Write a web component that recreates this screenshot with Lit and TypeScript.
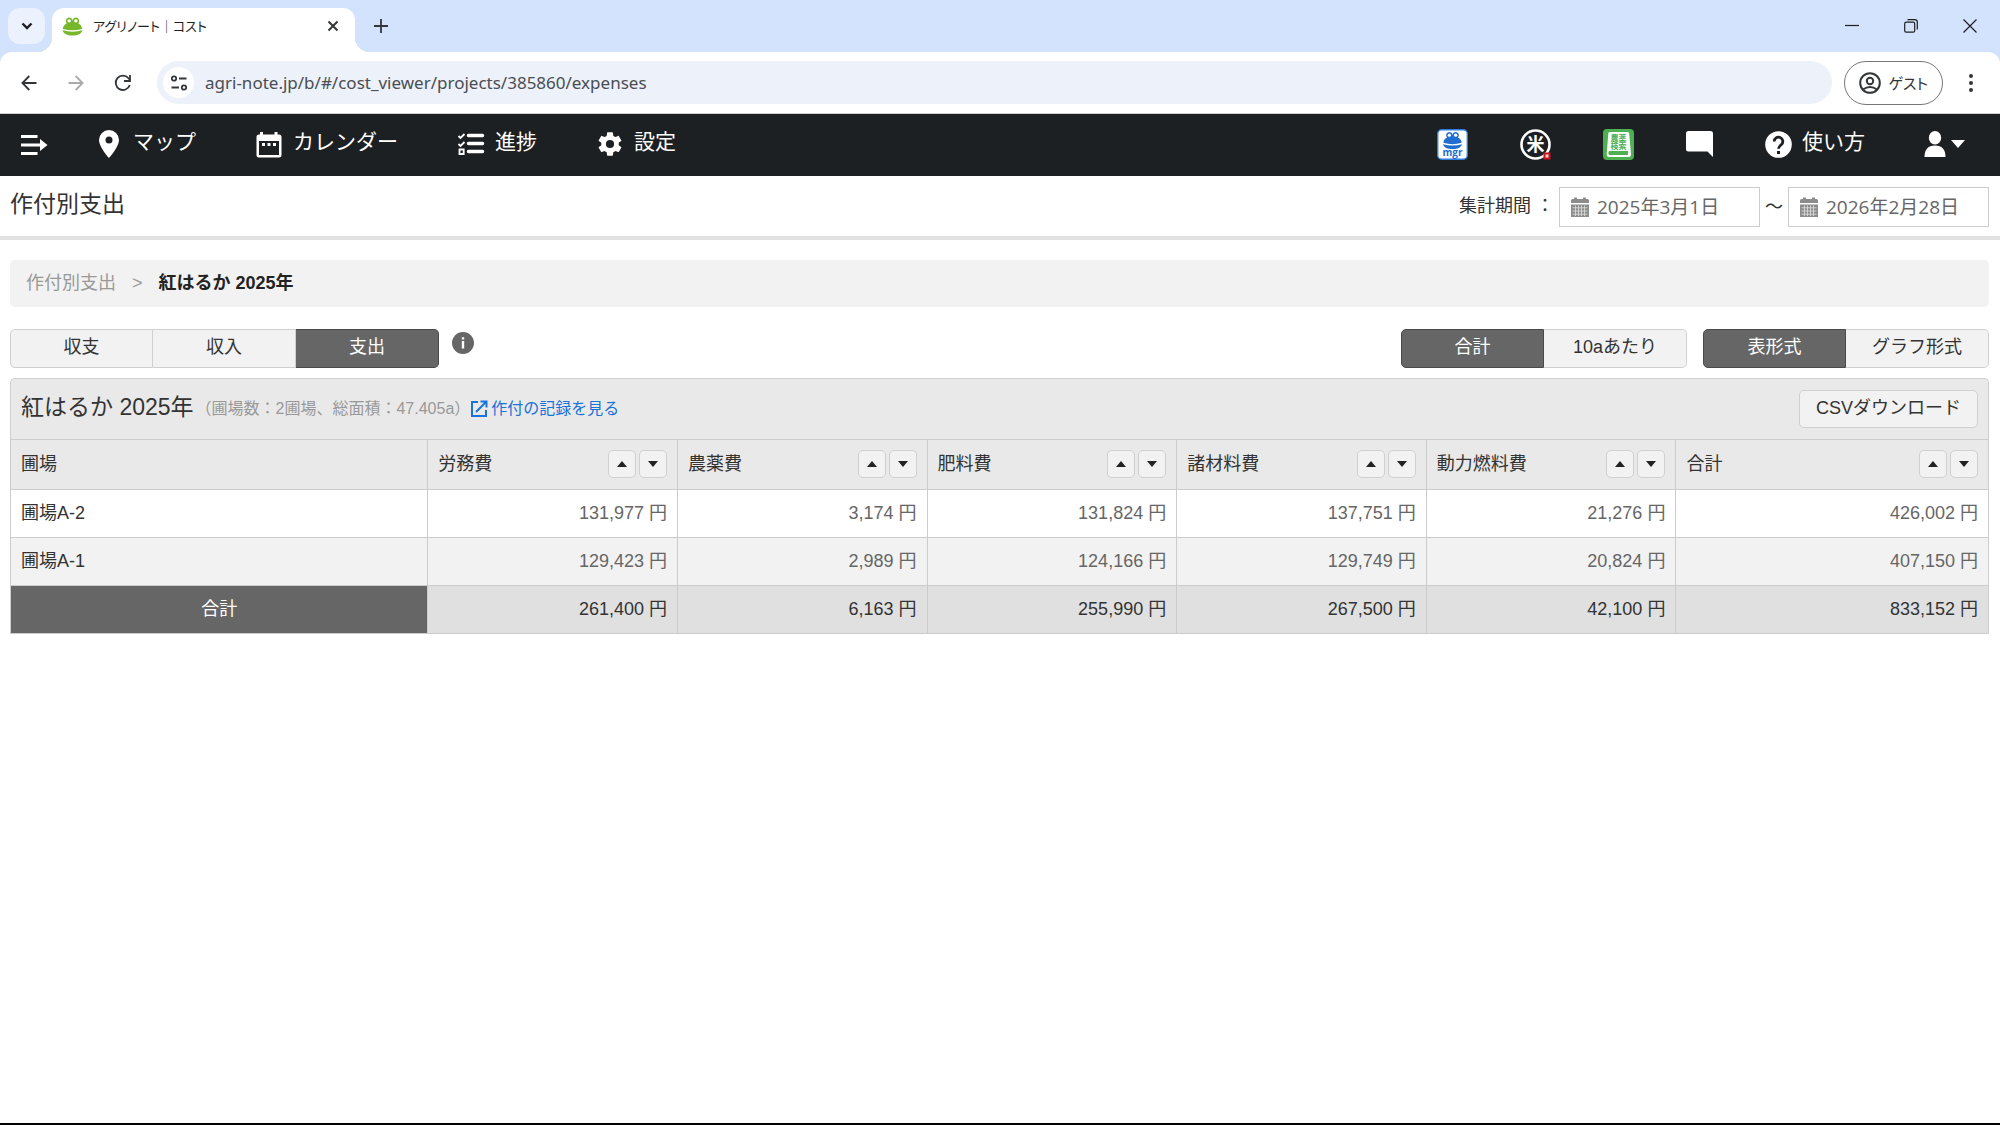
import { LitElement, html, css, svg } from "lit";
import { customElement, property, state } from "lit/decorators.js";
import { classMap } from "lit/directives/class-map.js";

type Row = { name: string; values: number[] };

const HEADS = ["労務費", "農薬費", "肥料費", "諸材料費", "動力燃料費", "合計"];
const ROWS: Row[] = [
  { name: "圃場A-2", values: [131977, 3174, 131824, 137751, 21276, 426002] },
  { name: "圃場A-1", values: [129423, 2989, 124166, 129749, 20824, 407150] },
];
const yen = (n: number) => `${n.toLocaleString("en-US")} 円`;

const frog = (eye: string) => svg`
  <path d="M1 12c0-3 2-5 4-6a3.500 3.500 0 1 1 6-2.500 3.500 3.500 0 1 1 6 2.500c2 1 4 3 4 6q-10 3-20 0z" fill="currentColor"/>
  <circle cx="7.500" cy="3.600" r="1.800" fill=${eye}/>
  <circle cx="14.500" cy="3.600" r="1.800" fill=${eye}/>
  <path d="M.5 13.500q10.500 3 21 0c-1 3.500-5 5.500-10.500 5.500S1.500 17 .5 13.500z" fill="currentColor"/>`;

const reset = css`
  * { box-sizing: border-box; }
  button { font: inherit; color: inherit; border: 0; background: none; padding: 0; margin: 0; cursor: pointer; }
  a { color: inherit; text-decoration: none; }
  svg { display: block; flex: none; }
`;

@customElement("browser-chrome")
export class BrowserChrome extends LitElement {
  static styles = [
    reset,
    css`
      :host { display: block; background: #d3e2fd; color: #333639; }
      .strip { display: flex; height: 52px; padding: 8px 0 0 8px; }
      .search { width: 37px; height: 36px; border-radius: 12px; background: #ebf2fe; display: grid; place-items: center; color: #1f1f1f; }
      .tab { position: relative; display: flex; align-items: center; width: 303px; height: 44px; margin-left: 7px; padding: 0 11px 8px 10px; border-radius: 12px 12px 0 0; background: #fff; font: 13px/20px "Noto Sans CJK JP", sans-serif; }
      .tab::before, .tab::after { content: ""; position: absolute; bottom: 0; width: 14px; height: 14px; }
      .tab::before { left: -14px; background: radial-gradient(circle at 0 0, transparent 14px, #fff 14px); }
      .tab::after { right: -14px; background: radial-gradient(circle at 100% 0, transparent 14px, #fff 14px); }
      .fav { color: #76b82a; }
      .name { flex: 1; margin-left: 10px; font-feature-settings: "palt"; white-space: nowrap; color: #1f1f1f; }
      .icon { width: 22px; height: 36px; display: grid; place-items: center; }
      .plus { margin-left: 15px; }
      .window { display: flex; gap: 37px; margin-left: auto; padding-right: 19px; color: #1f1f1f; }
      .bar { display: flex; align-items: center; height: 61px; padding: 0 18px; background: #fff; border-radius: 12px 12px 0 0; }
      .nav { display: flex; gap: 25px; }
      .off { color: #a9abad; }
      .omni { display: flex; align-items: center; flex: 1; height: 43px; margin: 0 12px 0 23px; padding-left: 6px; border-radius: 22px; background: #ecf1fa; }
      .site { width: 31px; height: 31px; border-radius: 50%; background: #fff; display: grid; place-items: center; }
      .url { flex: 1; min-width: 0; margin-left: 11px; border: 0; outline: 0; padding: 0; background: none; color: #4a4d51; font: 17px/24px "Noto Sans", sans-serif; }
      .guest { display: flex; align-items: center; gap: 7px; height: 44px; padding: 0 14px; border: 1px solid #777; border-radius: 22px; font: 15px/20px "Noto Sans CJK JP", sans-serif; font-feature-settings: "palt"; }
      .more { margin-left: 17px; width: 22px; }
      .edge { height: 1px; background: #cfd2d2; }
    `,
  ];

  render() {
    const line = (d: string, w = 2) =>
      svg`<path d=${d} fill="none" stroke="currentColor" stroke-width=${w}/>`;
    return html`
      <div class="strip">
        <button class="search" aria-label="タブを検索">
          <svg width="14" height="14" viewBox="0 0 14 14">${line("M2.500 4.500L7 9l4.500-4.500", 2.4)}</svg>
        </button>
        <div class="tab">
          <svg class="fav" width="21" height="19" viewBox="0 0 22 19">${frog("#fff")}</svg>
          <span class="name">アグリノート｜コスト</span>
          <button class="icon" aria-label="タブを閉じる">
            <svg width="12" height="12" viewBox="0 0 12 12">${line("M1.500 1.500l9 9M10.500 1.500l-9 9", 2)}</svg>
          </button>
        </div>
        <button class="icon plus" aria-label="新しいタブ">
          <svg width="14" height="14" viewBox="0 0 14 14">${line("M7 0v14M0 7h14", 1.8)}</svg>
        </button>
        <div class="window">
          <button class="icon" aria-label="最小化">
            <svg width="14" height="14" viewBox="0 0 14 14">${line("M0 6.500h14", 1.2)}</svg>
          </button>
          <button class="icon" aria-label="元に戻す">
            <svg width="14" height="14" viewBox="0 0 14 14">
              <rect x=".7" y="3.200" width="10" height="10" rx="1.500" fill="none" stroke="currentColor" stroke-width="1.200"/>
              ${line("M3.500 1q.5-.4 1-.4h6.300q2.500 0 2.500 2.500v6.300q0 .6-.4 1.100", 1.2)}
            </svg>
          </button>
          <button class="icon" aria-label="閉じる">
            <svg width="14" height="14" viewBox="0 0 14 14">${line("M.5.5l13 13M13.500.5l-13 13", 1.2)}</svg>
          </button>
        </div>
      </div>
      <div class="bar">
        <div class="nav">
          <button class="icon" aria-label="戻る">
            <svg width="16" height="16" viewBox="0 0 16 16">${line("M15.500 8H1.500M8.300 1L1.400 8l6.900 7", 1.8)}</svg>
          </button>
          <button class="icon off" aria-label="進む">
            <svg width="16" height="16" viewBox="0 0 16 16">${line("M.5 8h14M7.700 1l6.900 7-6.900 7", 1.8)}</svg>
          </button>
          <button class="icon" aria-label="再読み込み">
            <svg width="18" height="18" viewBox="0 0 18 18">
              ${line("M15.800 11A7.200 7.200 0 1 1 14.500 4.200L16 6", 1.8)}
              ${line("M16 1v6h-6", 1.8)}
            </svg>
          </button>
        </div>
        <div class="omni">
          <button class="site" aria-label="サイト情報を表示">
            <svg width="16" height="16" viewBox="0 0 16 16">
              ${line("M8 3.500h7.500M.5 12.500H8", 2)}
              <circle cx="3" cy="3.500" r="2.200" fill="none" stroke="currentColor" stroke-width="1.800"/>
              <circle cx="13" cy="12.500" r="2.200" fill="none" stroke="currentColor" stroke-width="1.800"/>
            </svg>
          </button>
          <input class="url" aria-label="アドレスバー" value="agri-note.jp/b/#/cost_viewer/projects/385860/expenses" />
        </div>
        <button class="guest">
          <svg width="22" height="22" viewBox="0 0 22 22" fill="none" stroke="currentColor" stroke-width="2">
            <circle cx="11" cy="11" r="9.800"/><circle cx="11" cy="9" r="3.200"/>
            <path d="M4 17.500q7-5 14 0"/>
          </svg>
          ゲスト
        </button>
        <button class="icon more" aria-label="メニュー">
          <svg width="4" height="18" viewBox="0 0 4 18" fill="currentColor">
            <circle cx="2" cy="2" r="2"/><circle cx="2" cy="9" r="2"/><circle cx="2" cy="16" r="2"/>
          </svg>
        </button>
      </div>
      <div class="edge"></div>
    `;
  }
}

@customElement("app-nav")
export class AppNav extends LitElement {
  static styles = [
    reset,
    css`
      :host { display: flex; align-items: center; height: 62px; padding: 0 35px 2px 20px; background: #1d2023; color: #fff; font: 21px/30px "Liberation Sans", "Noto Sans CJK JP", sans-serif; }
      .menu { margin-right: 47px; padding-top: 2px; }
      .links { display: flex; gap: 59px; }
      .link { display: flex; align-items: center; gap: 10px; }
      .word { padding-bottom: 4px; }
      .tools { display: flex; align-items: center; gap: 52px; margin-left: auto; }
      .user { display: flex; align-items: center; gap: 5px; margin-left: 7px; }
      .tiny { font: 700 10px "Open Sans", sans-serif; }
      .kanji { font: 700 8px "Noto Sans CJK JP", sans-serif; }
      .rice { font: 700 18px "Noto Sans CJK JP", sans-serif; }
    `,
  ];

  render() {
    return html`
      <button class="menu" aria-label="メニューを開く">
        <svg width="28" height="22" viewBox="0 0 28 22" fill="currentColor">
          <path d="M1 1h16.500v3H1zM1 9.500h19V5l7.500 6-7.500 6v-4.500H1zM1 18h16.500v3H1z"/>
        </svg>
      </button>
      <nav class="links">
        <a class="link" href="#map">
          <svg width="28" height="28" viewBox="0 0 28 28"><path fill="currentColor" fill-rule="evenodd" d="M14 0a10 10 0 0 1 10 10c0 7-10 18-10 18S4 17 4 10A10 10 0 0 1 14 0zm0 6.500a3.500 3.500 0 1 0 0 7 3.500 3.500 0 0 0 0-7z"/></svg>
          <span class="word">マップ</span>
        </a>
        <a class="link" href="#calendar">
          <svg width="28" height="28" viewBox="0 0 28 28"><path fill="currentColor" fill-rule="evenodd" d="M5 2h3v2.500h11.500V2h3v2.500H24a2.500 2.500 0 0 1 2.500 2.500v18a2.500 2.500 0 0 1-2.500 2.500H4A2.500 2.500 0 0 1 1.500 25V7A2.500 2.500 0 0 1 4 4.500h1zM4 11v14h20V11zM7 13h3v3H7zm5.500 0h3v3h-3zm5.500 0h3v3h-3z"/></svg>
          <span class="word">カレンダー</span>
        </a>
        <a class="link" href="#progress">
          <svg width="28" height="28" viewBox="0 0 28 28" fill="none" stroke="currentColor">
            <path stroke-width="3.500" stroke-linecap="round" d="M11.500 5.500h14M11.500 13.500h14M11.500 21.500h14"/>
            <path stroke-width="1.800" d="M1.500 6l2 2 4-4M1.500 14l2 2 4-4M2.500 19.500h4.200v4.500H2.500z"/>
          </svg>
          <span class="word">進捗</span>
        </a>
        <a class="link" href="#settings">
          <svg width="28" height="28" viewBox="0 0 24 24"><path fill="currentColor" d="M19.430 12.980c.04-.32.07-.64.07-.98s-.03-.66-.07-.98l2.110-1.650c.19-.15.24-.42.12-.64l-2-3.460c-.12-.22-.39-.3-.61-.22l-2.490 1c-.52-.4-1.080-.73-1.690-.98l-.38-2.650A.49.49 0 0 0 14 2h-4c-.25 0-.46.18-.49.42l-.38 2.650c-.61.25-1.170.59-1.690.98l-2.490-1c-.23-.09-.49 0-.61.22l-2 3.460c-.13.22-.07.49.12.64l2.110 1.650c-.04.32-.07.65-.07.98s.03.66.07.98l-2.110 1.650c-.19.15-.24.42-.12.64l2 3.460c.12.22.39.3.61.22l2.490-1c.52.4 1.080.73 1.690.98l.38 2.650c.03.24.24.42.49.42h4c.25 0 .46-.18.49-.42l.38-2.650c.61-.25 1.170-.59 1.690-.98l2.490 1c.23.09.49 0 .61-.22l2-3.460c.12-.22.07-.49-.12-.64zM12 15.500A3.500 3.500 0 1 1 12 8.500a3.500 3.500 0 0 1 0 7z"/></svg>
          <span class="word">設定</span>
        </a>
      </nav>
      <div class="tools">
        <a href="#manager" aria-label="アグリノートマネージャー">
          <svg width="31" height="31" viewBox="0 0 31 31" color="#1f6fd0">
            <rect x=".7" y=".7" width="29.600" height="29.600" rx="4" fill="#fff" stroke="#2f7de0" stroke-width="1.400"/>
            <g transform="translate(5.500 3) scale(.91 .9)">${frog("#fff")}</g>
            <text class="tiny" x="15.500" y="27" text-anchor="middle" fill="#1f6fd0">mgr</text>
          </svg>
        </a>
        <a href="#rice" aria-label="米市場">
          <svg width="31" height="31" viewBox="0 0 31 31">
            <circle cx="15.500" cy="15.500" r="14" fill="none" stroke="#fff" stroke-width="2.600"/>
            <text class="rice" x="15.500" y="22" text-anchor="middle" fill="#fff">米</text>
            <rect x="23.500" y="23.500" width="7" height="7" fill="#c8141e"/>
            <rect x="25.500" y="25.500" width="3" height="3" fill="#f3c9cb"/>
          </svg>
        </a>
        <a href="#pesticide" aria-label="農薬検索">
          <svg width="31" height="31" viewBox="0 0 31 31">
            <rect width="31" height="31" rx="4" fill="#4caf50"/>
            <path d="M7 3h17.500q1.500 0 1.700 1.500L28 25q.2 3-2.500 3H6q-2.500 0-2.300-3L5.300 4.500Q5.500 3 7 3z" fill="#fff"/>
            <path d="M6 22h19v4H6q-1.500-2 0-4z" fill="#4caf50"/>
            <text class="kanji" x="15.500" y="11.500" text-anchor="middle" fill="#4caf50">農薬</text>
            <text class="kanji" x="15.500" y="19.500" text-anchor="middle" fill="#4caf50">検索</text>
          </svg>
        </a>
        <button aria-label="お知らせ">
          <svg width="27" height="26" viewBox="0 0 27 26"><path fill="currentColor" d="M2.500 0h22Q27 0 27 2.500V26l-5.500-5.500h-19Q0 20.500 0 18V2.500Q0 0 2.500 0z"/></svg>
        </button>
        <a class="link" href="#help">
          <svg width="27" height="27" viewBox="0 0 27 27">
            <circle cx="13.500" cy="13.500" r="13.300" fill="currentColor"/>
            <path d="M9.200 10.500a4.300 4.300 0 1 1 7.300 3q-3 2.300-3 4.300" fill="none" stroke="#1d2023" stroke-width="2.800"/>
            <rect x="12" y="20" width="3" height="3" fill="#1d2023"/>
          </svg>
          <span class="word">使い方</span>
        </a>
        <button class="user" aria-label="アカウント">
          <svg width="22" height="26" viewBox="0 0 22 26" fill="currentColor"><ellipse cx="11" cy="6.800" rx="6.200" ry="6.800"/><path d="M.5 26Q.5 14.500 11 14.500T21.500 26z"/></svg>
          <svg width="14" height="8" viewBox="0 0 14 8"><path d="M0 0h14L7 8z" fill="currentColor"/></svg>
        </button>
      </div>
    `;
  }
}

@customElement("button-pair")
export class ButtonPair extends LitElement {
  @property({ type: Array }) options: string[] = [];
  @property({ type: Number }) selected = 0;

  static styles = [
    reset,
    css`
      :host { display: flex; }
      .opt { width: 143px; height: 39px; padding-bottom: 3px; border: 1px solid #d0d0d0; border-left-width: 0; background: #f2f2f2; color: #333; }
      .opt:first-child { border-left-width: 1px; border-radius: 5px 0 0 5px; }
      .opt:last-child { border-radius: 0 5px 5px 0; }
      .on { background: #666; border-color: #4a4a4a; color: #fff; }
    `,
  ];

  render() {
    return html`${this.options.map(
      (label, i) => html`<button
        class=${classMap({ opt: true, on: i === this.selected })}
        aria-pressed=${i === this.selected}
        @click=${() => (this.selected = i)}
      >${label}</button>`
    )}`;
  }
}

@customElement("app-root")
export class AppRoot extends LitElement {
  @state() private rows = ROWS;

  static styles = [
    reset,
    css`
      :host { display: flex; flex-direction: column; min-height: 100vh; box-sizing: border-box; border-bottom: 2px solid #000; background: #fff; color: #333; font: 18px/26px "Liberation Sans", "Noto Sans CJK JP", sans-serif; }
      .title { display: flex; align-items: center; justify-content: space-between; height: 64px; padding: 2px 11px 0 10px; border-bottom: 4px solid #e2e2e2; }
      h1 { margin: 0; padding-bottom: 6px; font: inherit; font-size: 23px; line-height: 32px; }
      .period { display: flex; align-items: center; gap: 5px; }
      .period label { padding-bottom: 2px; }
      .date { display: flex; align-items: center; gap: 8px; width: 201px; height: 40px; padding: 0 11px; border: 1px solid #ccc; }
      .day { flex: 1; min-width: 0; border: 0; outline: 0; padding: 0; background: none; color: #666; font: 19px/26px "Open Sans", "Noto Sans CJK JP", sans-serif; }
      main { padding: 20px 11px 20px 10px; }
      .crumbs { display: flex; gap: 16px; height: 47px; padding: 10px 16px; border-radius: 5px; background: #f2f2f2; color: #999; }
      .here { color: #222; font-weight: 700; }
      .controls { display: flex; gap: 16px; margin: 22px 0 10px; }
      .spacer { flex: 1; }
      .info { width: 22px; height: 22px; margin: 3px 0 0 -3px; }
      .panel { border: 1px solid #d0d0d0; border-bottom: 0; border-radius: 5px 5px 0 0; background: #e9e9e9; display: flex; align-items: center; height: 61px; padding: 0 10px; }
      h2 { margin: 0 2px 0 0; padding-bottom: 4px; font: inherit; font-size: 23px; line-height: 32px; }
      .note { font-size: 16px; color: #999; }
      .records { display: flex; align-items: center; gap: 3px; font-size: 16px; color: #1a73d9; }
      .csv { margin-left: auto; height: 38px; padding: 0 16px 2px; border: 1px solid #d0d0d0; border-radius: 5px; background: #f2f2f2; }
      table { width: 100%; border-collapse: collapse; table-layout: fixed; }
      .c-name { width: 21.1%; }
      .c-cost { width: 12.62%; }
      th, td { height: 48px; padding: 0 10px 1px; border: 1px solid #ccc; font-weight: 400; text-align: right; }
      th { text-align: left; }
      td { color: #666; }
      thead th { height: 50px; background: #e9e9e9; }
      .head { display: flex; align-items: center; gap: 3px; }
      .label { flex: 1; padding-bottom: 1px; }
      .sort { display: grid; place-items: center; width: 28px; height: 28px; border: 1px solid #d0d0d0; border-radius: 5px; background: #f2f2f2; color: #222; }
      tbody tr:nth-child(even) { background: #f2f2f2; }
      tfoot { background: #e0e0e0; }
      tfoot td { color: #333; }
      tfoot th { background: #666; color: #fff; text-align: center; }
    `,
  ];

  private sort(col: number, dir: number) {
    this.rows = [...this.rows].sort((a, b) => dir * (a.values[col] - b.values[col]));
  }

  private date(id: string, label: string, value: string) {
    return html`<span class="date">
      <svg width="18" height="20" viewBox="0 0 18 20">
        <path d="M0 3.500Q0 2 1.500 2H3V.5h3V2h6V.5h3V2h1.500Q18 2 18 3.500V6H0zM0 7.500h18V20H0z" fill="#8c8c8c"/>
        <path d="M1.500 10.800h15M1.500 14h15M1.500 17.200h15M4.500 8.500v10.500M7.500 8.500v10.500M10.500 8.500v10.500M13.500 8.500v10.500" stroke="#d8d8d8" stroke-width=".9"/>
      </svg>
      <input class="day" id=${id} aria-label=${label} .value=${value} />
    </span>`;
  }

  render() {
    const totals = HEADS.map((_, i) => this.rows.reduce((sum, r) => sum + r.values[i], 0));
    return html`
      <browser-chrome></browser-chrome>
      <app-nav></app-nav>
      <header class="title">
        <h1>作付別支出</h1>
        <div class="period">
          <label for="from">集計期間 ：</label>
          ${this.date("from", "集計期間の開始日", "2025年3月1日")}
          <span>～</span>
          ${this.date("to", "集計期間の終了日", "2026年2月28日")}
        </div>
      </header>
      <main>
        <nav class="crumbs">
          <a href="#expenses">作付別支出</a><span>&gt;</span><span class="here">紅はるか 2025年</span>
        </nav>
        <div class="controls">
          <button-pair .options=${["収支", "収入", "支出"]} .selected=${2}></button-pair>
          <button class="info" aria-label="説明">
            <svg width="22" height="22" viewBox="0 0 22 22">
              <circle cx="11" cy="11" r="11" fill="#666"/>
              <path d="M9.800 5.200h2.400v2.400H9.800zM9.800 9h2.400v7.500H9.800z" fill="#fff"/>
            </svg>
          </button>
          <span class="spacer"></span>
          <button-pair .options=${["合計", "10aあたり"]}></button-pair>
          <button-pair .options=${["表形式", "グラフ形式"]}></button-pair>
        </div>
        <section class="panel">
          <h2>紅はるか 2025年</h2>
          <span class="note">（圃場数：2圃場、総面積：47.405a）</span>
          <a class="records" href="#records">
            <svg width="18" height="18" viewBox="0 0 18 18" fill="none" stroke="currentColor" stroke-width="2">
              <path d="M8 2H2v14h14v-6M10.500 1.500H16.500V7.500M16 2L6 12"/>
            </svg>
            作付の記録を見る
          </a>
          <button class="csv">CSVダウンロード</button>
        </section>
        <table>
          <colgroup>
            <col class="c-name" />
            ${HEADS.slice(1).map(() => html`<col class="c-cost" />`)}
            <col />
          </colgroup>
          <thead>
            <tr>
              <th scope="col">圃場</th>
              ${HEADS.map(
                (h, i) => html`<th scope="col">
                  <div class="head">
                    <span class="label">${h}</span>
                    <button class="sort" aria-label="${h}の昇順" @click=${() => this.sort(i, 1)}>
                      <svg width="10" height="6" viewBox="0 0 10 6"><path d="M0 6h10L5 0z" fill="currentColor"/></svg>
                    </button>
                    <button class="sort" aria-label="${h}の降順" @click=${() => this.sort(i, -1)}>
                      <svg width="10" height="6" viewBox="0 0 10 6"><path d="M0 0h10L5 6z" fill="currentColor"/></svg>
                    </button>
                  </div>
                </th>`
              )}
            </tr>
          </thead>
          <tbody>
            ${this.rows.map(
              (r) => html`<tr>
                <th scope="row">${r.name}</th>
                ${r.values.map((v) => html`<td>${yen(v)}</td>`)}
              </tr>`
            )}
          </tbody>
          <tfoot>
            <tr>
              <th scope="row">合計</th>
              ${totals.map((v) => html`<td>${yen(v)}</td>`)}
            </tr>
          </tfoot>
        </table>
      </main>
    `;
  }
}
